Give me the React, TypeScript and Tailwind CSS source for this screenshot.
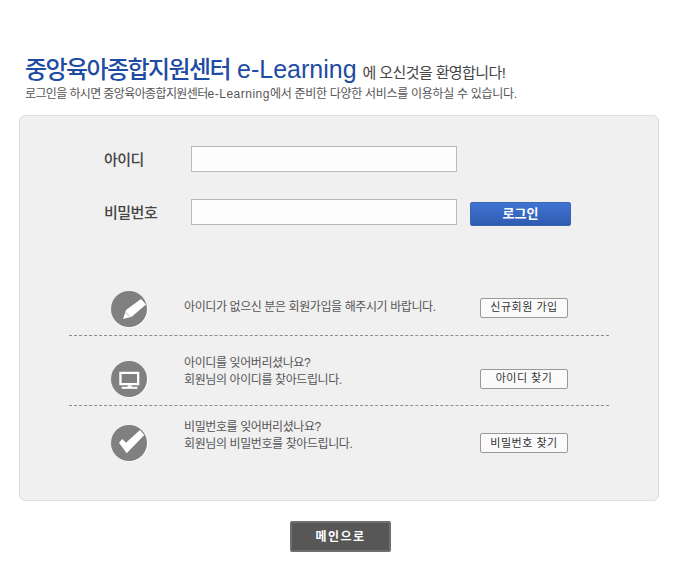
const krFont = "font-['Liberation_Sans','Noto_Sans_CJK_KR',sans-serif]";

function IconDisc({ children }: { children: React.ReactNode }) {
  return (
    <svg width="40" height="40" viewBox="0 0 40 40">
      <circle cx="20.8" cy="20.8" r="18" fill="#ffffff" />
      <circle cx="20" cy="20" r="18" fill="#808080" />
      {children}
    </svg>
  );
}

function PencilIcon() {
  return (
    <IconDisc>
      <path d="M14 30 L17 21 L32 10 L37 15.5 L22.7 27.7 Z" fill="#ffffff" />
      <path d="M16.6 23.2 L20.8 27.6" stroke="#a8a8a8" strokeWidth="0.8" fill="none" />
    </IconDisc>
  );
}

function MonitorIcon() {
  return (
    <IconDisc>
      <path d="M10.3 12.7 H30.3 V26.3 H10.3 Z M12.6 15 V24 H28 V15 Z" fill="#ffffff" fillRule="evenodd" />
      <rect x="18.7" y="26.3" width="4" height="1.6" fill="#ffffff" />
      <rect x="12.7" y="27.8" width="15.6" height="2" fill="#ffffff" />
    </IconDisc>
  );
}

function CheckIcon() {
  return (
    <IconDisc>
      <path d="M10 19.7 L13.3 16 L17 19.7 L31 7 L35.3 12 L17.7 30.3 Z" fill="#ffffff" />
    </IconDisc>
  );
}

interface HelpRowProps {
  icon: React.ReactNode;
  lines: string[];
  button: string;
  className: string;
  iconClass: string;
  buttonClass: string;
}

function HelpRow({ icon, lines, button, className, iconClass, buttonClass }: HelpRowProps) {
  return (
    <div className={`flex items-center ${className}`}>
      <div className={`ml-[40px] w-[40px] shrink-0 ${iconClass}`}>{icon}</div>
      <div className="ml-[35px] mt-[2px] w-[296px] text-[12px] leading-[17px] tracking-[-0.4px] text-[#555]">
        {lines.map((line) => (
          <div key={line}>{line}</div>
        ))}
      </div>
      <button
        className={`h-[20px] w-[88px] rounded-[2px] border border-[#999] bg-[#fafafa] text-[11px] font-normal leading-none tracking-[0.5px] text-[#333] ${buttonClass}`}
      >
        {button}
      </button>
    </div>
  );
}

export default function App() {
  return (
    <div className={`h-[573px] w-[675px] overflow-hidden bg-white ${krFont}`}>
      {/* Title */}
      <div className="flex h-[34px] items-baseline pl-[25px] mt-[52px]">
        <span className="text-[24px] font-medium leading-[34px] tracking-[-1.58px] text-[#1f4ca3]">중앙육아종합지원센터</span>
        <span className="ml-[7px] text-[25px] leading-[34px] text-[#1f4ca3]">e-Learning</span>
        <span className="ml-[6px] text-[15px] tracking-[-0.6px] text-[#444]">에 오신것을 환영합니다!</span>
      </div>
      <p className="pl-[25px] text-[12px] leading-[16px] tracking-[-0.3px] text-[#555]">
        <span className="tracking-[-0.62px]">로그인을 하시면 중앙육아종합지원센터</span>
        <span className="tracking-[0.5px]">e-Learning</span>에서 준비한 다양한 서비스를 이용하실 수 있습니다.
      </p>

      {/* Login box */}
      <div className="mx-[19px] mt-[13px] h-[386px] w-[640px] rounded-[6px] border border-[#dcdcdc] bg-[#f0f0f0] px-[49px] pt-[30px]">
        <div className="flex h-[26px] items-center">
          <label className="ml-[35px] mt-[2px] w-[87px] text-[15px] font-medium tracking-[-0.5px] text-[#444]">아이디</label>
          <input className="h-[26px] w-[266px] border border-[#b9b9b9] bg-[#fdfdfd]" />
        </div>
        <div className="mt-[27px] flex h-[26px] items-center">
          <label className="ml-[35px] mt-[2px] w-[87px] text-[15px] font-medium tracking-[-0.5px] text-[#444]">비밀번호</label>
          <input className="h-[26px] w-[266px] border border-[#b9b9b9] bg-[#fdfdfd]" />
          <button className="ml-[13px] mt-[3px] h-[24px] w-[101px] rounded-[2px] border border-[#3a66b4] bg-gradient-to-b from-[#3f73d4] to-[#2f5cb0] text-[13px] font-bold text-white">
            로그인
          </button>
        </div>

        <div className="mt-[47px]">
          <HelpRow
            icon={<PencilIcon />}
            lines={['아이디가 없으신 분은 회원가입을 해주시기 바랍니다.']}
            button="신규회원 가입"
            className="h-[64px] border-b border-dashed border-[#8c8c8c] pt-[6px]"
            iconClass="mt-[4px]"
            buttonClass="mt-[2px]"
          />
          <HelpRow
            icon={<MonitorIcon />}
            lines={['아이디를 잊어버리셨나요?', '회원님의 아이디를 찾아드립니다.']}
            button="아이디 찾기"
            className="h-[70px] border-b border-dashed border-[#8c8c8c]"
            iconClass="mt-[16px]"
            buttonClass="mt-[16px]"
          />
          <HelpRow
            icon={<CheckIcon />}
            lines={['비밀번호를 잊어버리셨나요?', '회원님의 비밀번호를 찾아드립니다.']}
            button="비밀번호 찾기"
            className="h-[58px]"
            iconClass="mt-[16px]"
            buttonClass="mt-[16px]"
          />
        </div>
      </div>

      {/* Back to main */}
      <div className="mt-[20px] flex justify-center pl-[6px]">
        <button className="h-[31px] w-[101px] rounded-[2px] border-2 border-[#6f6f6f] bg-[#575757] text-[12px] font-bold tracking-[1.5px] text-white">
          메인으로
        </button>
      </div>
    </div>
  );
}
